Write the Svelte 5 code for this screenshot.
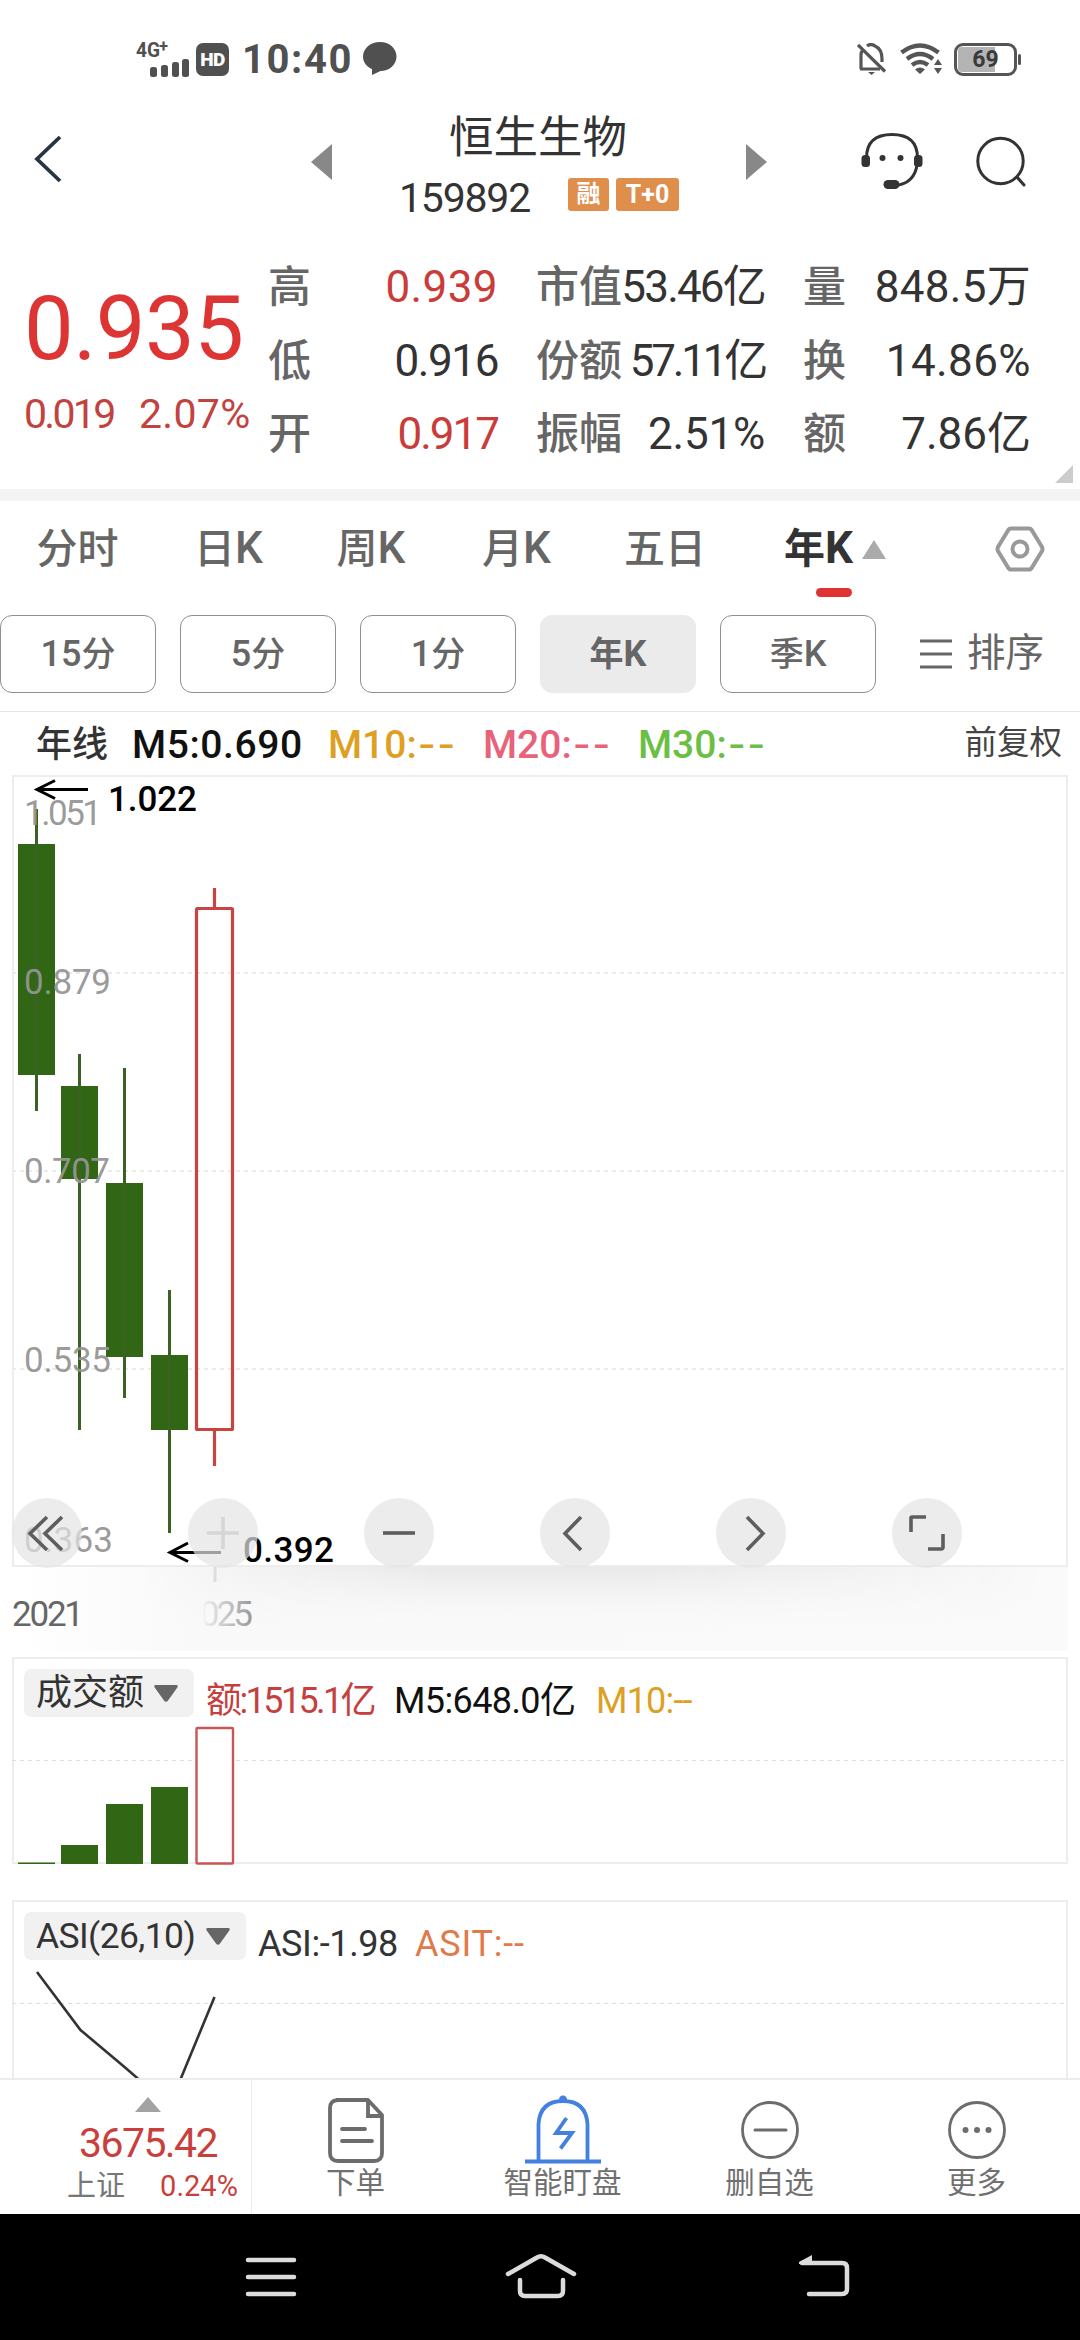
<script lang="ts">
	interface Candle {
		x: number;
		high: number;
		top: number;
		bottom: number;
		low: number;
		up?: boolean;
	}

	const quotes = [
		[
			{ label: '高', value: '0.939', red: true, spacing: 0.4 },
			{ label: '市值', value: '53.46亿', spacing: -1.8 },
			{ label: '量', value: '848.5万', spacing: 0.3 }
		],
		[
			{ label: '低', value: '0.916', spacing: -1.4 },
			{ label: '份额', value: '57.11亿', spacing: -3.2 },
			{ label: '换', value: '14.86%', spacing: 0.4 }
		],
		[
			{ label: '开', value: '0.917', red: true, spacing: -2 },
			{ label: '振幅', value: '2.51%', spacing: -0.2 },
			{ label: '额', value: '7.86亿', spacing: 0 }
		]
	];

	const tabs = [
		{ text: '分时', latin: '' },
		{ text: '日', latin: 'K' },
		{ text: '周', latin: 'K' },
		{ text: '月', latin: 'K' },
		{ text: '五日', latin: '' },
		{ text: '年', latin: 'K' }
	];
	let activeTab = $state(5);

	const periods = [
		{ num: '15', text: '分', latin: '' },
		{ num: '5', text: '分', latin: '' },
		{ num: '1', text: '分', latin: '' },
		{ num: '', text: '年', latin: 'K' },
		{ num: '', text: '季', latin: 'K' }
	];
	let activePeriod = $state(3);

	const candles: Candle[] = [
		{ x: 36.5, high: 809, top: 844, bottom: 1075, low: 1111 },
		{ x: 79.5, high: 1054, top: 1086, bottom: 1179, low: 1430 },
		{ x: 124.5, high: 1068, top: 1183, bottom: 1357, low: 1398 },
		{ x: 169.5, high: 1290, top: 1355, bottom: 1430, low: 1533 },
		{ x: 214.5, high: 888, top: 908.5, bottom: 1429.5, low: 1466, up: true }
	];

	const gridLines = [973, 1171, 1369];

	const axis = [
		{ text: '1.051', y: 825, width: 78 },
		{ text: '0.879', y: 994, width: 87 },
		{ text: '0.707', y: 1183, width: 86 },
		{ text: '0.535', y: 1372, width: 87 },
		{ text: '0.363', y: 1552, width: 89 }
	];

	const volumes = [
		{ x: 18, top: 205.5 },
		{ x: 61, top: 188 },
		{ x: 106, top: 147 },
		{ x: 151, top: 130 }
	];

	const actions = [
		{ id: 'order', label: '下单' },
		{ id: 'watch', label: '智能盯盘' },
		{ id: 'remove', label: '删自选' },
		{ id: 'more', label: '更多' }
	];

	const tools = ['first', 'plus', 'minus', 'prev', 'next', 'full'];
</script>

<div class="screen">
	<!-- Status bar -->
	<div class="status">
		<svg class="signal" width="56" height="48" viewBox="0 -6 56 48">
			<text x="0" y="16" font-size="21" font-weight="700" textLength="24" lengthAdjust="spacingAndGlyphs">4G</text>
			<text x="23" y="11" font-size="17" font-weight="700" textLength="9" lengthAdjust="spacingAndGlyphs">+</text>
			<rect x="14" y="26" width="7" height="10" rx="2.5" />
			<rect x="25" y="24" width="7" height="12" rx="2.5" />
			<rect x="36" y="21" width="7" height="15" rx="2.5" />
			<rect x="46" y="18" width="7" height="18" rx="2.5" />
		</svg>
		<span class="hd">HD</span>
		<span class="time">10:40</span>
		<svg class="chat" width="34" height="34" viewBox="0 0 34 34">
			<path d="M17 0C26 0 33.500 6 33.500 14.500S26 29 17.500 29L9 33V27C4 25 0 20.500 0 14.500C0 6 8 0 17 0Z" />
		</svg>
		<div class="status-right">
			<svg width="30" height="32" viewBox="0 0 30 32" fill="none" stroke="#555" stroke-width="3.200">
				<path d="M1 2L28 28.500" />
				<path d="M4 26V12Q4 9 6 7M3 26H23M10 3Q14 0 18 3Q25 6 25 16V19" />
				<path d="M11 29H18L14.500 32Z" fill="#555" stroke="none" />
			</svg>
			<svg width="42" height="32" viewBox="0 0 42 32" fill="none" stroke="#555" stroke-width="4.500">
				<path d="M1.500 9.500Q20 -4.500 38.500 9.500" />
				<path d="M7 16Q20 6 33 16" />
				<path d="M12 22Q20 16 28 22" />
				<path d="M15 26.500Q20 22.500 25 26.500L20 31Z" fill="#555" stroke="none" />
				<path d="M34 22L38 16L42 22ZM34 25H42L38 31Z" fill="#555" stroke="none" />
			</svg>
			<span class="battery"><span class="level"></span><b>69</b></span>
		</div>
	</div>

	<!-- Title row -->
	<header>
		<svg class="back" width="30" height="50" viewBox="0 0 30 50">
			<path d="M26 3L3 25L26 47" fill="none" stroke="#2a3440" stroke-width="3.800" />
		</svg>
		<svg class="prev-stock" width="21" height="36" viewBox="0 0 21 36"><path d="M21 0V36L0 18Z" fill="#888" /></svg>
		<div class="stock">
			<div class="name">恒生生物</div>
			<div class="code-row">
				<span class="code">159892</span>
				<span class="badge margin">融</span>
				<span class="badge t0">T+0</span>
			</div>
		</div>
		<svg class="next-stock" width="21" height="36" viewBox="0 0 21 36"><path d="M0 0V36L21 18Z" fill="#888" /></svg>
		<svg class="service" width="62" height="60" viewBox="0 0 62 60">
			<path d="M5.500 26Q5.500 2.500 31 2.500T56.500 26Q56.500 49 38 53" fill="none" stroke="#333" stroke-width="3" />
			<rect x="0.500" y="23" width="8.500" height="12" rx="3.500" fill="#333" />
			<rect x="53" y="23" width="8.500" height="12" rx="3.500" fill="#333" />
			<rect x="22.500" y="48" width="16" height="9" rx="4.500" fill="#333" />
			<circle cx="21.500" cy="26" r="3" fill="#333" />
			<circle cx="39.500" cy="26" r="3" fill="#333" />
		</svg>
		<svg class="search" width="52" height="54" viewBox="0 0 52 54" fill="none" stroke="#333" stroke-width="3">
			<circle cx="24.500" cy="25" r="22.700" />
			<path d="M41 41L48 49" stroke-linecap="round" />
		</svg>
	</header>

	<!-- Quote summary -->
	<section class="quote">
		<div class="price">
			<div class="last">0.935</div>
			<div class="change"><span class="diff">0.019</span><span class="rate">2.07%</span></div>
		</div>
		<div class="facts">
			{#each quotes as row}
				{#each row as item}
					<span class="fact-label">{item.label}</span>
					<span class="fact-value" class:red={item.red} style="letter-spacing: {item.spacing}px">{item.value}</span>
				{/each}
			{/each}
		</div>
		<svg class="corner" width="18" height="18" viewBox="0 0 18 18"><path d="M18 0V18H0Z" fill="#ccc" /></svg>
	</section>

	<!-- Chart tabs -->
	<nav class="tabs">
		{#each tabs as tab, i}
			<button class="tab" class:active={i === activeTab} onclick={() => (activeTab = i)}>
				<span>{tab.text}{#if tab.latin}<span class="latin">{tab.latin}</span>{/if}</span>
				{#if i === activeTab}
					<svg class="caret" width="24" height="19" viewBox="0 0 24 19"><path d="M12 0L24 19H0Z" fill="#aaa" /></svg>
					<i class="underline"></i>
				{/if}
			</button>
		{/each}
		<svg class="settings" width="50" height="46" viewBox="0 0 50 46" fill="none" stroke="#999" stroke-width="4">
			<path d="M16 2.500H34Q36 2.500 37 4.500L47 21Q48 23 47 25L37 41.500Q36 43.500 34 43.500H16Q14 43.500 13 41.500L3 25Q2 23 3 21L13 4.500Q14 2.500 16 2.500Z" />
			<circle cx="25" cy="23" r="7.500" />
		</svg>
	</nav>

	<div class="periods">
		{#each periods as p, i}
			<button class="period" class:active={i === activePeriod} onclick={() => (activePeriod = i)}>
				<span>{#if p.num}<span class="num">{p.num}</span>{/if}{p.text}{#if p.latin}<span class="num">{p.latin}</span>{/if}</span>
			</button>
		{/each}
		<div class="sort">
			<svg width="32" height="30" viewBox="0 0 32 30" stroke="#666" stroke-width="3"><path d="M0 2H32M0 15H32M0 28H32" /></svg>
			<span>排序</span>
		</div>
	</div>

	<div class="averages">
		<span class="line-name">年线</span>
		<span class="ma m5">M5:0.690</span>
		<span class="ma m10">M10:<span class="dash">--</span></span>
		<span class="ma m20">M20:<span class="dash">--</span></span>
		<span class="ma m30">M30:<span class="dash">--</span></span>
		<span class="adjust">前复权</span>
	</div>

	<!-- Candlestick chart -->
	<div class="chart">
		<svg width="1080" height="883" viewBox="0 774 1080 883">
			<defs>
				<linearGradient id="band" x1="0" x2="1">
					<stop offset="0" stop-color="#fff" />
					<stop offset="0.180" stop-color="#f9f9f9" />
					<stop offset="1" stop-color="#fafafa" />
				</linearGradient>
				<linearGradient id="shade" x1="0" x2="0" y1="0" y2="1">
					<stop offset="0" stop-color="#e9e9e9" />
					<stop offset="0.350" stop-color="#f1f1f1" />
					<stop offset="1" stop-color="#fafafa" stop-opacity="0" />
				</linearGradient>
				<linearGradient id="sides" x1="0" x2="1">
					<stop offset="0.120" stop-color="#000" />
					<stop offset="0.400" stop-color="#fff" />
					<stop offset="0.600" stop-color="#fff" />
					<stop offset="0.980" stop-color="#000" />
				</linearGradient>
				<mask id="shadeMask"><rect x="12" y="1567" width="1056" height="84" fill="url(#sides)" /></mask>
				<linearGradient id="yearFade" gradientUnits="userSpaceOnUse" x1="203" x2="252" y1="0" y2="0">
					<stop offset="0" stop-color="#666" stop-opacity="0" />
					<stop offset="0.050" stop-color="#666" stop-opacity="0.080" />
					<stop offset="1" stop-color="#666" stop-opacity="0.650" />
				</linearGradient>
			</defs>
			<rect x="12" y="1567" width="1056" height="84" fill="url(#band)" />
			<rect x="12" y="1567" width="1056" height="62" fill="url(#shade)" mask="url(#shadeMask)" />
			<rect x="13" y="776" width="1054" height="790" fill="none" stroke="#ededed" stroke-width="2" />
			{#each gridLines as y}
				<line x1="12" x2="1068" y1={y} y2={y} stroke="#ebebeb" stroke-width="2" stroke-dasharray="4 4" />
			{/each}

			{#each candles as c}
				{#if c.up}
					<g fill="none" stroke="#c94342" stroke-width="3.200">
						<rect x={c.x - 18} y={c.top} width="36" height={c.bottom - c.top} rx="1" />
						<path d="M{c.x} {c.high}V{c.top}M{c.x} {c.bottom}V{c.low}" />
					</g>
				{:else}
					<rect x={c.x - 18.5} y={c.top} width="37" height={c.bottom - c.top} fill="#316614" />
					<line x1={c.x} x2={c.x} y1={c.high} y2={c.low} stroke="#3b6125" stroke-width="3" />
				{/if}
			{/each}

			{#each axis as a}
				<text class="axis" x="24" y={a.y} textLength={a.width}>{a.text}</text>
			{/each}

			<g fill="none" stroke="#000" stroke-width="3">
				<path d="M88 789.500H38M55 780.500L37 789.500L55 798.500" />
				<path d="M221 1552.500H171M188 1543L170 1552.500L188 1561.500" />
			</g>
			<text class="mark" x="108" y="811" textLength="89">1.022</text>
			<text class="mark" x="243" y="1562" textLength="91">0.392</text>

			<line x1="215" x2="215" y1="1567" y2="1582" stroke="#ddd" stroke-width="3" />
			<text class="year" x="12" y="1626" textLength="72">2021</text>
			<text class="year" x="183" y="1626" textLength="70" style:fill="url(#yearFade)">2025</text>
		</svg>

		<div class="tools">
			{#each tools as tool}
				<button class="tool" aria-label={tool}>
					<svg width="70" height="70" viewBox="0 0 70 70" fill="none" stroke="#5e5e5e" stroke-width="3.600">
						{#if tool === 'first'}
							<path d="M35 19L18 35.500L35 52M50 19L33 35.500L50 52" />
						{:else if tool === 'plus'}
							<path d="M19 35H51M35 19V51" stroke="#d6d6d6" />
						{:else if tool === 'minus'}
							<path d="M19 35H51" />
						{:else if tool === 'prev'}
							<path d="M41 19L25 35.500L41 52" />
						{:else if tool === 'next'}
							<path d="M31 19L47 35.500L31 52" />
						{:else}
							<path d="M34 19H20Q19 19 19 20V34M51 36V49Q51 51 49 51H36" />
						{/if}
					</svg>
				</button>
			{/each}
		</div>
	</div>

	<!-- Turnover -->
	<div class="indicator volume">
		<svg class="plot" width="1080" height="243" viewBox="0 0 1080 243">
			<rect x="13" y="1" width="1054" height="205" fill="none" stroke="#ededed" stroke-width="2" />
			<line x1="12" x2="1068" y1="103.500" y2="103.500" stroke="#ddd" stroke-width="1" stroke-dasharray="4 4" />
			{#each volumes as v}
				<rect x={v.x} y={v.top} width="37" height={207 - v.top} fill="#316614" />
			{/each}
			<rect x="196.500" y="71" width="36.500" height="135.500" rx="1" fill="#fff" stroke="#c75655" stroke-width="2.400" />
		</svg>
		<div class="legend">
			<button class="pill">成交额<svg width="24" height="17" viewBox="0 0 24 17"><path d="M2 0H22Q25 0 23 3L14 15.500Q12 18 10 15.500L1 3Q-1 0 2 0Z" fill="#666" /></svg></button>
			<span class="val amount">额:1515.1亿</span>
			<span class="val m5">M5:648.0亿</span>
			<span class="val m10">M10:--</span>
		</div>
	</div>

	<!-- ASI -->
	<div class="indicator asi">
		<svg class="plot" width="1080" height="178" viewBox="0 0 1080 178">
			<path d="M13 178V1H1067V178" fill="none" stroke="#ededed" stroke-width="2" />
			<line x1="12" x2="1068" y1="103.500" y2="103.500" stroke="#ddd" stroke-width="1" stroke-dasharray="4 4" />
			<path d="M37 72L80.500 130L124.500 167L169.500 206L214.500 97" fill="none" stroke="#333" stroke-width="2.600" />
		</svg>
		<div class="legend">
			<button class="pill wide">ASI(26,10)<svg width="24" height="17" viewBox="0 0 24 17"><path d="M2 0H22Q25 0 23 3L14 15.500Q12 18 10 15.500L1 3Q-1 0 2 0Z" fill="#666" /></svg></button>
			<span class="val asi-val">ASI:-1.98</span>
			<span class="val asit">ASIT:--</span>
		</div>
	</div>

	<!-- Bottom actions -->
	<footer>
		<div class="index">
			<svg width="26" height="15" viewBox="0 0 26 15"><path d="M13 0L26 15H0Z" fill="#a3a3a3" /></svg>
			<div class="index-value">3675.42</div>
			<div class="index-row"><span>上证</span><span class="pct">0.24%</span></div>
		</div>
		{#each actions as action}
			<button class="action">
				<svg width="80" height="72" viewBox="0 0 80 72" fill="none" stroke="#6c6c6c" stroke-width="3.800">
					{#if action.id === 'order'}
						<path d="M20 6H52L66 21V59Q66 67 58 67H22Q14 67 14 59V14Q14 6 22 6" stroke-linejoin="round" />
						<path d="M52 7V22H66" />
						<path d="M26 35H49M26 47H56" stroke-linecap="round" />
					{:else if action.id === 'watch'}
						<g stroke="#4380e0">
							<path d="M15.500 67V30Q17 7 40 7T64.500 30V67" />
							<path d="M2 67.500H78" />
							<path d="M43.500 24L33 39H49L37.500 54.500" />
							<path d="M36 6Q36 1.500 40 1.500T44 6L46 8H34Z" fill="#4380e0" stroke="none" />
						</g>
					{:else if action.id === 'remove'}
						<circle cx="40" cy="36" r="27.500" stroke-width="2.800" />
						<path d="M25 36H56" stroke-width="3" stroke-linecap="round" />
					{:else}
						<circle cx="40" cy="36" r="27.500" stroke-width="2.800" />
						<g fill="#6c6c6c" stroke="none">
							<circle cx="28.500" cy="36" r="3" />
							<circle cx="40" cy="36" r="3" />
							<circle cx="51.500" cy="36" r="3" />
						</g>
					{/if}
				</svg>
				<span>{action.label}</span>
			</button>
		{/each}
	</footer>

	<!-- System navigation -->
	<div class="sysnav">
		<svg width="60" height="50" viewBox="0 0 60 50"><path d="M7 8H53M7 25H53M7 42H53" /></svg>
		<svg class="home" width="80" height="50" viewBox="0 0 80 50">
			<path d="M7 22L36 5.500Q40 3 44 5.500L73 22" />
			<path d="M19 28V39Q19 44 24 44H57Q62 44 62 39V28" />
		</svg>
		<svg width="60" height="50" viewBox="0 0 60 50">
			<path d="M8 11H48Q53 11 53 16V37Q53 42 48 42H15" />
			<path d="M5 10L18 3V12H5Z" class="head" />
		</svg>
	</div>
</div>

<style>
	:global(body) {
		background: #fff;
	}

	.screen {
		width: 1080px;
		height: 2340px;
		display: flex;
		flex-direction: column;
		overflow: hidden;
		background: #fff;
		color: #333;
		font-family: Roboto, 'Noto Sans CJK SC', sans-serif;
	}

	.screen > * {
		flex: none;
		box-sizing: border-box;
	}

	svg {
		display: block;
		flex: none;
	}

	button {
		font: inherit;
		color: inherit;
		background: none;
		border: 0;
		padding: 0;
		margin: 0;
	}

	.status {
		height: 106px;
		padding: 12px 59px 0 136px;
		display: flex;
		align-items: center;
		color: #505050;
	}

	.signal,
	.chat {
		fill: #505050;
	}

	.hd {
		width: 33px;
		height: 33px;
		margin-left: 4px;
		border-radius: 7px;
		background: #505050;
		color: #fff;
		font-size: 19px;
		font-weight: 900;
		line-height: 33px;
		text-align: center;
		letter-spacing: -0.5px;
	}

	.time {
		width: 112px;
		margin-left: 13px;
		font-size: 40px;
		font-weight: 700;
		letter-spacing: 1.6px;
	}

	.chat {
		margin-left: 9px;
	}

	.status-right {
		margin-left: auto;
		display: flex;
		align-items: center;
	}

	.status-right svg + svg {
		margin-left: 13px;
	}

	.battery {
		position: relative;
		box-sizing: border-box;
		width: 63px;
		height: 33px;
		margin-left: 12px;
		margin-right: 4px;
		border: 3px solid #555;
		border-radius: 9px;
		font-size: 23px;
		line-height: 27px;
		text-align: center;
		color: #3a3a3a;
	}

	.battery::after {
		content: '';
		position: absolute;
		right: -7px;
		top: 8px;
		width: 3px;
		height: 11px;
		border-radius: 2px;
		background: #555;
	}

	.battery .level {
		position: absolute;
		left: 1px;
		top: 1px;
		bottom: 1px;
		width: 37px;
		border-radius: 4px 0 0 4px;
		background: #b4b4b4;
	}

	.battery b {
		position: relative;
	}

	header {
		height: 134px;
		display: flex;
		align-items: flex-start;
	}

	.back {
		margin: 28px 0 0 34px;
	}

	.prev-stock {
		margin: 38px 0 0 247px;
	}

	.stock {
		width: 414px;
	}

	.name {
		margin-top: 4px;
		padding-left: 117px;
		font-size: 44.5px;
		line-height: 56px;
	}

	.code-row {
		display: flex;
		align-items: center;
		height: 60px;
		margin-top: 2px;
		padding-left: 67px;
	}

	.code {
		width: 169px;
		font-size: 41px;
		letter-spacing: -1.2px;
	}

	.badge {
		height: 33px;
		margin-top: -7px;
		border-radius: 3px;
		background: #e08e4c;
		color: #fff;
		font-size: 25px;
		font-weight: 700;
		line-height: 33px;
		text-align: center;
	}

	.badge.margin {
		width: 41px;
		font-size: 24px;
	}

	.badge.t0 {
		width: 63px;
		margin-left: 7px;
	}

	.next-stock {
		margin-top: 38px;
	}

	.service {
		margin: 26px 0 0 94px;
	}

	.search {
		margin: 30px 0 0 53px;
	}

	.quote {
		position: relative;
		height: 261px;
		display: flex;
		border-bottom: 12px solid #f4f4f4;
	}

	.price {
		width: 268px;
		padding-left: 24px;
		box-sizing: border-box;
		color: #dc3533;
		white-space: nowrap;
	}

	.last {
		margin-top: 38px;
		font-size: 88.5px;
		line-height: 102px;
		letter-spacing: -0.6px;
	}

	.change {
		display: flex;
		margin-top: 10px;
		font-size: 41px;
		line-height: 48px;
		color: #c24240;
	}

	.diff {
		width: 115px;
		letter-spacing: -2.7px;
	}

	.rate {
		letter-spacing: 0.3px;
	}

	.facts {
		display: grid;
		grid-template-columns: 90px 140px 118px 149px 80px 186px;
		grid-auto-rows: 73.5px;
		margin-top: 11px;
		line-height: 73.5px;
		white-space: nowrap;
	}

	.fact-label {
		font-size: 43px;
		font-weight: 500;
		color: #666;
	}

	.fact-value {
		display: flex;
		justify-content: flex-end;
		font-size: 44px;
	}

	.fact-label:nth-child(6n + 3),
	.fact-label:nth-child(6n + 5) {
		padding-left: 38px;
	}

	.red {
		color: #c93c3a;
	}

	.corner {
		position: absolute;
		right: 7px;
		bottom: 6px;
	}

	.tabs {
		height: 114px;
		display: grid;
		grid-template-columns: 155px 147px 138px 153px 144px 1fr 84px;
		align-items: start;
	}

	.tab {
		display: flex;
		align-items: center;
		justify-content: center;
		height: 96px;
		font-size: 41px;
		line-height: 96px;
		font-weight: 500;
		color: #666;
	}

	.tab > span {
		height: 96px;
	}

	.tab .latin {
		font-size: 44px;
		line-height: 60px;
	}

	.tab.active {
		position: relative;
		justify-content: flex-start;
		padding-left: 47px;
		font-weight: 700;
		color: #333;
	}

	.caret {
		margin-left: 9px;
	}

	.underline {
		position: absolute;
		left: 79px;
		bottom: 0;
		width: 36px;
		height: 9px;
		border-radius: 5px;
		background: #e03231;
	}

	.settings {
		margin-top: 25px;
		margin-left: -1px;
	}

	.periods {
		height: 97px;
		display: flex;
		gap: 24px;
		border-bottom: 1px solid #e5e5e5;
	}

	.period {
		box-sizing: border-box;
		width: 156px;
		height: 78px;
		border: 1px solid #8f8f8f;
		border-radius: 12px;
		font-size: 34px;
		line-height: 76px;
		font-weight: 500;
		text-align: center;
		color: #666;
	}

	.period .num {
		font-size: 36px;
		line-height: 50px;
	}

	.period.active {
		border-color: #ebebeb;
		background: #ebebeb;
		font-weight: 700;
	}

	.sort {
		height: 78px;
		margin-left: 20px;
		display: flex;
		align-items: center;
		gap: 15px;
		font-size: 38.5px;
		line-height: 78px;
		color: #666;
	}

	.sort span {
		height: 80px;
	}

	.averages {
		height: 62px;
		display: flex;
		align-items: center;
		padding: 4px 18px 0 36px;
		line-height: 58px;
		white-space: nowrap;
	}

	.line-name {
		width: 96px;
		font-size: 36px;
		font-weight: 500;
	}

	.ma {
		width: 155px;
		font-size: 39px;
		font-weight: 500;
	}

	.ma.m5 {
		width: 196px;
		letter-spacing: 0.6px;
	}

	.dash {
		margin-left: 1px;
		font-family: Inter, sans-serif;
		letter-spacing: 1.5px;
		line-height: 40px;
	}

	.m5 {
		color: #111;
	}

	.m10 {
		color: #dea022;
	}

	.m20 {
		color: #e8637a;
	}

	.m30 {
		color: #6cbe45;
	}

	.adjust {
		margin-left: auto;
		margin-top: -5px;
		font-size: 32.5px;
		color: #444;
	}

	.chart {
		position: relative;
		height: 883px;
	}

	text {
		font-family: Roboto, sans-serif;
	}

	.axis {
		font-size: 35px;
		fill: #959595;
		fill-opacity: 0.94;
	}

	.mark {
		font-size: 35px;
		font-weight: 500;
		fill: #000;
	}

	.year {
		font-size: 35px;
		fill: #666;
	}

	.tools {
		position: absolute;
		left: 12px;
		bottom: 89px;
		display: flex;
		gap: 106px;
	}

	.tool {
		width: 70px;
		height: 70px;
		border-radius: 50%;
		background: rgba(228, 228, 228, 0.7);
	}

	.indicator {
		position: relative;
		padding-top: 12px;
	}

	.indicator.volume {
		height: 243px;
	}

	.indicator.asi {
		height: 178px;
		overflow: hidden;
	}

	.plot {
		position: absolute;
		left: 0;
		top: 0;
	}

	.legend {
		position: relative;
		display: flex;
		padding-left: 24px;
		white-space: nowrap;
	}

	.pill {
		box-sizing: border-box;
		width: 170px;
		height: 48px;
		padding: 0 16px 0 12px;
		display: flex;
		align-items: center;
		justify-content: space-between;
		border-radius: 7px;
		background: #f1f1f1;
		font-size: 36px;
		line-height: 48px;
		color: #333;
	}

	.pill.wide {
		width: 222px;
		font-size: 35.5px;
		letter-spacing: -0.6px;
	}

	.val {
		margin-top: 9px;
		font-size: 36px;
		line-height: 46px;
	}

	.amount {
		width: 189px;
		margin-left: 12px;
		letter-spacing: -2.6px;
		color: #c43f3d;
	}

	.val.m5 {
		width: 201px;
		margin-left: -1px;
		letter-spacing: -0.6px;
	}

	.val.m10 {
		margin-left: 1px;
		letter-spacing: -0.8px;
	}

	.asi-val {
		width: 157px;
		margin-left: 12px;
		letter-spacing: -0.4px;
	}

	.asit {
		letter-spacing: 0.8px;
		color: #e07a4b;
	}

	footer {
		height: 136px;
		display: flex;
		border-top: 2px solid #ececec;
		background: #fff;
	}

	.index {
		box-sizing: border-box;
		width: 252px;
		border-right: 1px solid #ececec;
		display: flex;
		flex-direction: column;
		align-items: center;
		padding: 17px 0 0 45px;
	}

	.index-value {
		margin-top: 7px;
		font-size: 41px;
		line-height: 48px;
		letter-spacing: -1.6px;
		color: #c93f3d;
	}

	.index-row {
		display: flex;
		gap: 35px;
		margin-top: 3px;
		margin-left: 9px;
		font-size: 29px;
		line-height: 32px;
		color: #777;
	}

	.pct {
		color: #c93f3d;
	}

	.action {
		width: 207px;
		display: flex;
		flex-direction: column;
		align-items: center;
		padding-top: 14px;
		font-size: 29.5px;
		line-height: 34px;
		color: #707070;
	}

	.sysnav {
		height: 126px;
		display: flex;
		padding: 38px 0 0 241px;
		background: #000;
	}

	.home {
		margin: 0 213px 0 200px;
	}

	.sysnav path {
		fill: none;
		stroke: #dcdcdc;
		stroke-width: 4.5;
		stroke-linecap: round;
	}

	.sysnav .head {
		fill: #dcdcdc;
		stroke: none;
	}
</style>
